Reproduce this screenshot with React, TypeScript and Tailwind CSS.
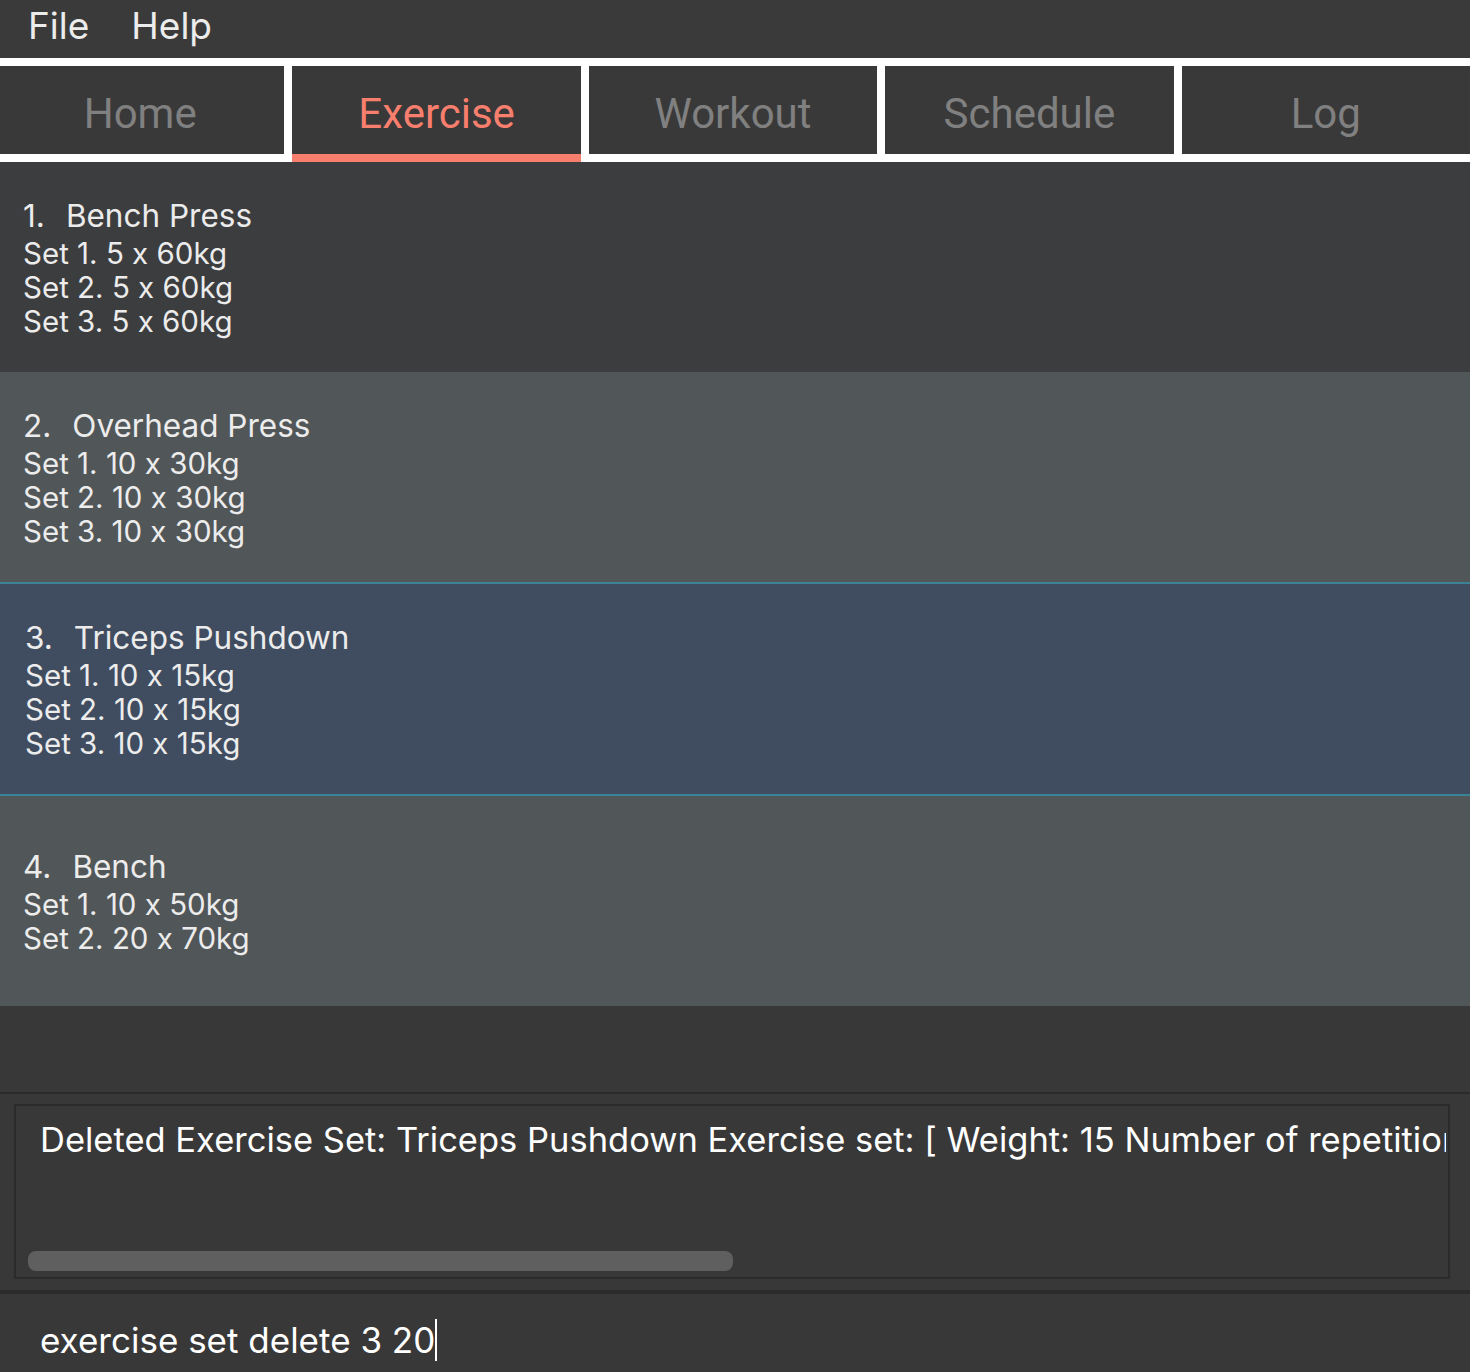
import React from 'react';

const tabs = ['Home', 'Exercise', 'Workout', 'Schedule', 'Log'];

const exercises = [
  { name: 'Bench Press', sets: ['5 x 60kg', '5 x 60kg', '5 x 60kg'] },
  { name: 'Overhead Press', sets: ['10 x 30kg', '10 x 30kg', '10 x 30kg'] },
  { name: 'Triceps Pushdown', sets: ['10 x 15kg', '10 x 15kg', '10 x 15kg'] },
  { name: 'Bench', sets: ['10 x 50kg', '20 x 70kg'] },
];

export default function App() {
  const active = 'Exercise';
  const selected = 2;

  return (
    <div
      className="w-[1470px] h-[1372px] flex flex-col bg-[#383838] overflow-hidden [font-feature-settings:'calt'_0]"
      style={{ fontFamily: 'Inter, "Noto Sans", sans-serif' }}
    >
      {/* Menu bar */}
      <div className="h-[58px] flex items-center gap-[42px] px-[28px] pb-[6px] bg-[#3a3a3a] text-[37px] text-[#ececec]">
        <span>File</span>
        <span>Help</span>
      </div>

      {/* Tabs */}
      <div className="bg-white pt-[8px] overflow-hidden">
        <div className="flex gap-[8px] ml-[-4px]">
          {tabs.map((tab) => (
            <div key={tab} className="flex-1 flex flex-col">
              <div
                className={`h-[88px] pt-[6px] flex items-center justify-center bg-[#393939] text-[42px] ${
                  tab === active ? 'text-[#f87e6e]' : 'text-[#808080]'
                }`}
                style={{ fontFamily: 'Roboto, sans-serif' }}
              >
                {tab}
              </div>
              <div className={`h-[8px] ${tab === active ? 'bg-[#f87e6e]' : 'bg-white'}`} />
            </div>
          ))}
        </div>
      </div>

      {/* Exercise list */}
      <div className="flex flex-col">
        {exercises.map((ex, i) => (
          <div
            key={ex.name}
            className={`flex flex-col justify-center text-[#ececec] ${
              i === selected
                ? 'h-[214px] bg-[#404c5f] border-y-2 border-[#3b8497] pl-[25px]'
                : i % 2 === 0
                ? 'h-[210px] bg-[#3c3d3f] pl-[23px]'
                : 'h-[210px] bg-[#515658] pl-[23px]'
            }`}
          >
            <div className="text-[31.5px] leading-[40px] flex">
              <span className="mr-[21px]">{i + 1}.</span>
              <span>{ex.name}</span>
            </div>
            {ex.sets.map((s, j) => (
              <div key={j} className="text-[29.5px] leading-[34px]">
                Set {j + 1}. {s}
              </div>
            ))}
          </div>
        ))}
      </div>

      <div className="flex-1" />

      {/* Result display */}
      <div className="h-[198px] border-t-2 border-[#2b2b2b] pl-[14px] pr-[20px] pt-[10px] pb-[11px] flex">
        <div className="flex-1 border-2 border-[#2b2b2b] flex flex-col overflow-hidden">
          <div className="flex-1 pl-[24px] pr-[2px] pt-[14px] overflow-hidden">
            <div className="whitespace-nowrap overflow-hidden text-[34.5px] leading-[40px] text-white">
              Deleted Exercise Set: Triceps Pushdown Exercise set: [ Weight: 15 Number of repetitions: 10 ]
            </div>
          </div>
          <div className="h-[30px] pl-[12px] pt-[4px]">
            <div className="w-[705px] h-[20px] rounded-[8px] bg-[#5f5f5f]" />
          </div>
        </div>
      </div>

      {/* Command box */}
      <div className="h-[82px] border-t-4 border-[#2b2b2b] flex items-center px-[40px] pt-[14px]">
        <span className="text-[35px] leading-[40px] text-white">exercise set delete 3 20</span>
        <span className="w-[2px] h-[42px] bg-white" />
      </div>
    </div>
  );
}
